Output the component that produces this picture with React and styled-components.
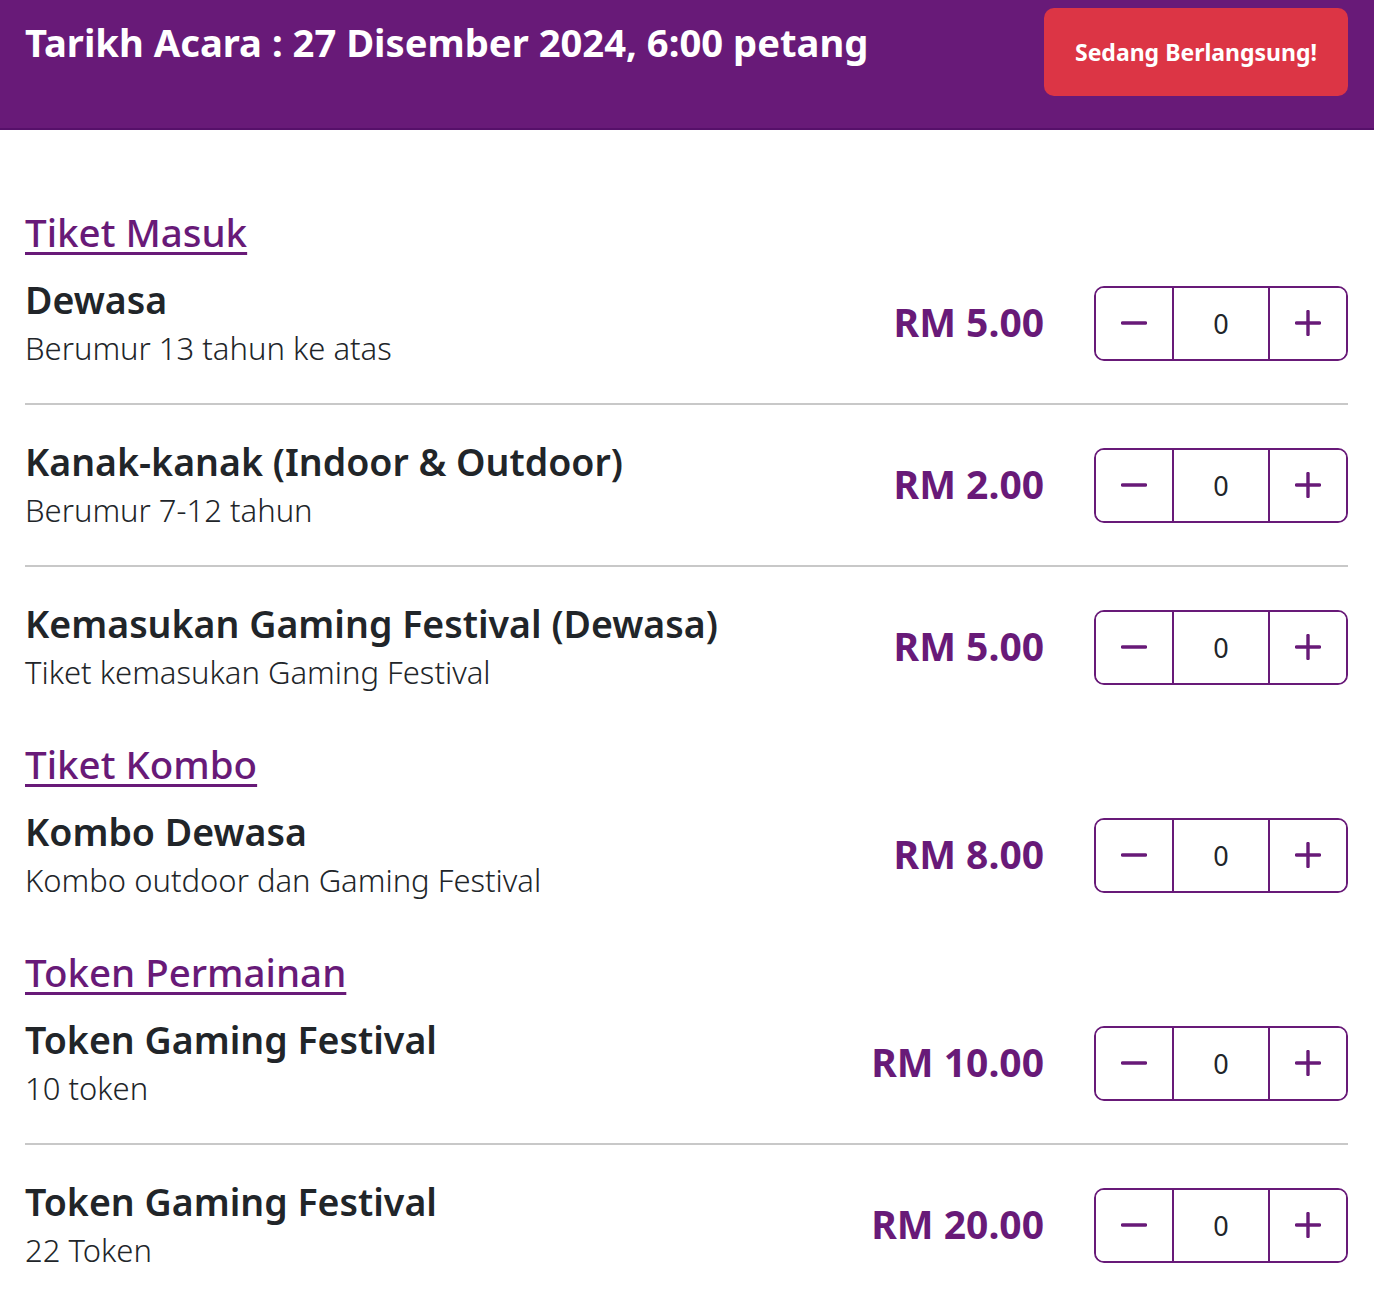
import React, { useState } from 'react';
import styled, { createGlobalStyle } from 'styled-components';

const GlobalStyle = createGlobalStyle`
  * { box-sizing: border-box; }
  body {
    margin: 0;
    background: #fff;
    font-family: 'Noto Sans', 'Open Sans', sans-serif;
    color: #212529;
  }
`;

const sections = [
  {
    title: 'Tiket Masuk',
    items: [
      { name: 'Dewasa', desc: 'Berumur 13 tahun ke atas', price: '5.00' },
      { name: 'Kanak-kanak (Indoor & Outdoor)', desc: 'Berumur 7-12 tahun', price: '2.00' },
      { name: 'Kemasukan Gaming Festival (Dewasa)', desc: 'Tiket kemasukan Gaming Festival', price: '5.00' },
    ],
  },
  {
    title: 'Tiket Kombo',
    items: [{ name: 'Kombo Dewasa', desc: 'Kombo outdoor dan Gaming Festival', price: '8.00' }],
  },
  {
    title: 'Token Permainan',
    items: [
      { name: 'Token Gaming Festival', desc: '10 token', price: '10.00' },
      { name: 'Token Gaming Festival', desc: '22 Token', price: '20.00' },
    ],
  },
];

function Stepper() {
  const [count, setCount] = useState(0);
  return (
    <StepperWrap>
      <StepButton onClick={() => setCount(c => Math.max(0, c - 1))} aria-label="kurang">
        <svg width="26" height="26" viewBox="0 0 26 26">
          <line x1="1.5" y1="13" x2="24.5" y2="13" stroke="#681a78" strokeWidth="3.4" strokeLinecap="round" />
        </svg>
      </StepButton>
      <Count>{count}</Count>
      <StepButton onClick={() => setCount(c => c + 1)} aria-label="tambah">
        <svg width="26" height="26" viewBox="0 0 26 26">
          <line x1="1.5" y1="13" x2="24.5" y2="13" stroke="#681a78" strokeWidth="3.4" strokeLinecap="round" />
          <line x1="13" y1="1.5" x2="13" y2="24.5" stroke="#681a78" strokeWidth="3.4" strokeLinecap="round" />
        </svg>
      </StepButton>
    </StepperWrap>
  );
}

export default function App() {
  return (
    <>
      <GlobalStyle />
      <Header>
        <EventDate>Tarikh Acara : 27 Disember 2024, 6:00 petang</EventDate>
        <LiveBadge>Sedang Berlangsung!</LiveBadge>
      </Header>
      <Main>
        {sections.map(section => (
          <Section key={section.title}>
            <SectionTitle>{section.title}</SectionTitle>
            {section.items.map((item, i) => (
              <Row key={i}>
                <Info>
                  <ItemName>{item.name}</ItemName>
                  <ItemDesc>{item.desc}</ItemDesc>
                </Info>
                <Price>RM {item.price}</Price>
                <Stepper />
              </Row>
            ))}
          </Section>
        ))}
      </Main>
    </>
  );
}

const Header = styled.header`
  display: flex;
  justify-content: space-between;
  align-items: flex-start;
  height: 130px;
  padding: 8px 26px 0 25px;
  background: #681a78;
  border-bottom: 2px solid #56106a;
`;

const EventDate = styled.h1`
  margin: 11px 0 0;
  color: #fff;
  font-size: 38.2px;
  font-weight: 700;
  line-height: 46px;
`;

const LiveBadge = styled.div`
  display: flex;
  align-items: center;
  justify-content: center;
  width: 304px;
  height: 88px;
  background: #dc3545;
  border-radius: 10px;
  color: #fff;
  font-size: 23px;
  font-weight: 700;
`;

const Main = styled.main`
  padding: 65px 26px 40px 25px;
`;

const Section = styled.section`
  margin-top: 18px;
`;

const SectionTitle = styled.h2`
  margin: 0;
  height: 44px;
  line-height: 38px;
  color: #681a78;
  font-size: 38.5px;
  font-weight: 500;
  text-decoration: underline;
  text-decoration-thickness: 3px;
  text-underline-offset: 5px;
`;

const Row = styled.div`
  display: flex;
  align-items: center;
  padding: 34px 0;

  &:first-of-type {
    padding-top: 20px;
  }

  & + & {
    border-top: 2px solid #c8c8c8;
  }
`;

const Info = styled.div`
  flex: 1;
  display: flex;
  flex-direction: column;
  gap: 5px;
`;

const ItemName = styled.div`
  font-size: 37.5px;
  font-weight: 600;
  line-height: 46px;
`;

const ItemDesc = styled.div`
  font-size: 31px;
  font-weight: 300;
  line-height: 41px;
`;

const Price = styled.div`
  padding-bottom: 4px;
  color: #681a78;
  font-size: 39px;
  font-weight: 700;
`;

const StepperWrap = styled.div`
  display: flex;
  margin-left: 50px;
  width: 254px;
  height: 75px;
  border: 2px solid #681a78;
  border-radius: 10px;
  overflow: hidden;
`;

const StepButton = styled.button`
  display: flex;
  align-items: center;
  justify-content: center;
  width: 77px;
  padding: 0;
  border: none;
  background: #fff;
  cursor: pointer;
`;

const Count = styled.div`
  display: flex;
  align-items: center;
  justify-content: center;
  width: 98px;
  border-left: 2px solid #681a78;
  border-right: 2px solid #681a78;
  font-size: 27px;
`;
